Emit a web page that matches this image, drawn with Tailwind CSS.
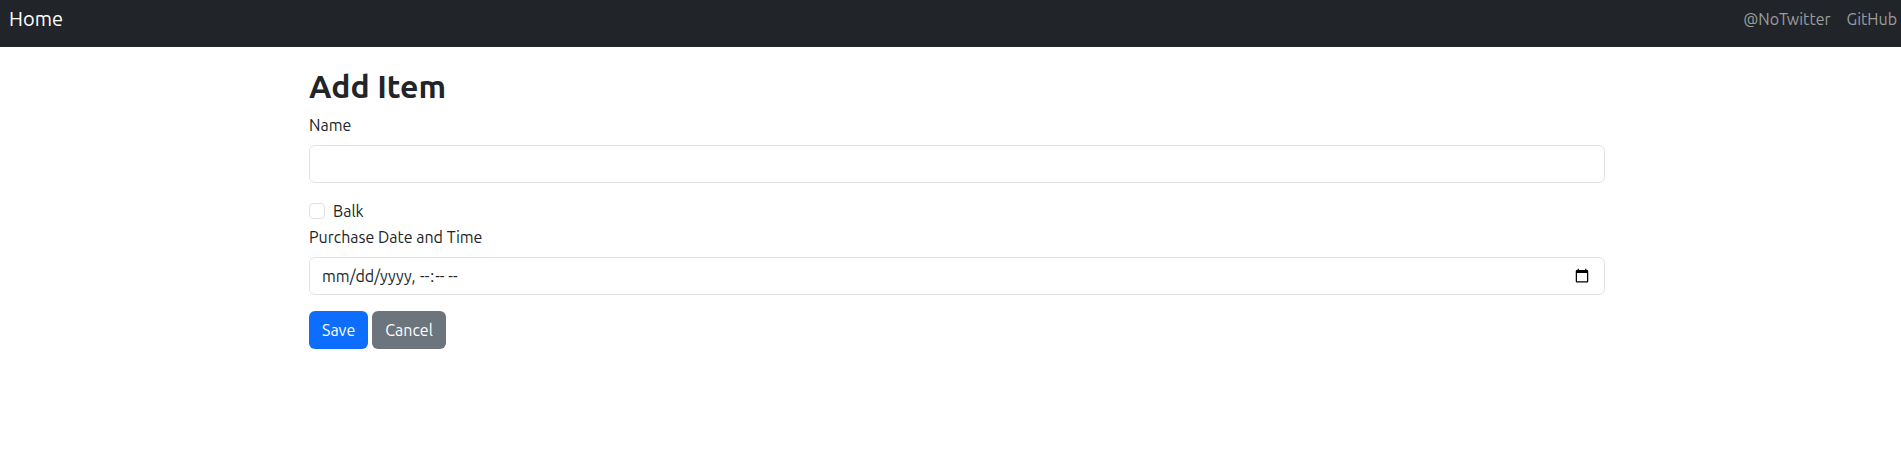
<!DOCTYPE html>
<html lang="en-US">
<head>
<meta charset="utf-8">
<meta name="viewport" content="width=device-width, initial-scale=1">
<title>Add Item</title>
<script src="https://cdn.jsdelivr.net/npm/@tailwindcss/browser@4"></script>
</head>
<body class="bg-white font-['Ubuntu','Noto_Sans',sans-serif] text-base text-[#212529]">
<nav class="flex h-[47px] items-start justify-between bg-[#212529] pr-1 pl-[9px]">
  <a href="#" class="pt-1 text-xl leading-[30px] text-white">Home</a>
  <div class="flex gap-4 pt-[7px] text-[#9b9d9e]">
    <a href="#">@NoTwitter</a>
    <a href="#">GitHub</a>
  </div>
</nav>
<main class="pl-[13px]">
  <form class="mx-auto max-w-[1320px] px-3 pt-5">
    <h2 class="mb-2 text-[32px] leading-[38px] font-semibold">Add Item</h2>
    <label for="name" class="mb-2 block">Name</label>
    <input id="name" type="text" class="mb-4 block h-[38px] w-full rounded-md border border-[#dee2e6] bg-white px-3">
    <div class="mb-0.5 flex items-center gap-2">
      <input id="balk" type="checkbox" class="size-4 appearance-none rounded border border-[#dee2e6] bg-white checked:border-[#0d6efd] checked:bg-[#0d6efd]">
      <label for="balk">Balk</label>
    </div>
    <label for="purchased" class="mb-2 block">Purchase Date and Time</label>
    <input id="purchased" type="datetime-local" class="mb-4 block h-[38px] w-full rounded-md border border-[#dee2e6] bg-white px-3 [&::-webkit-datetime-edit-month-field]:p-0 [&::-webkit-datetime-edit-day-field]:p-0 [&::-webkit-datetime-edit-year-field]:p-0">
    <div class="flex gap-1">
      <button type="submit" class="h-[38px] rounded-md bg-[#0d6efd] px-[13px] text-white">Save</button>
      <button type="button" class="h-[38px] rounded-md bg-[#6c757d] px-[13px] text-white">Cancel</button>
    </div>
  </form>
</main>
</body>
</html>
